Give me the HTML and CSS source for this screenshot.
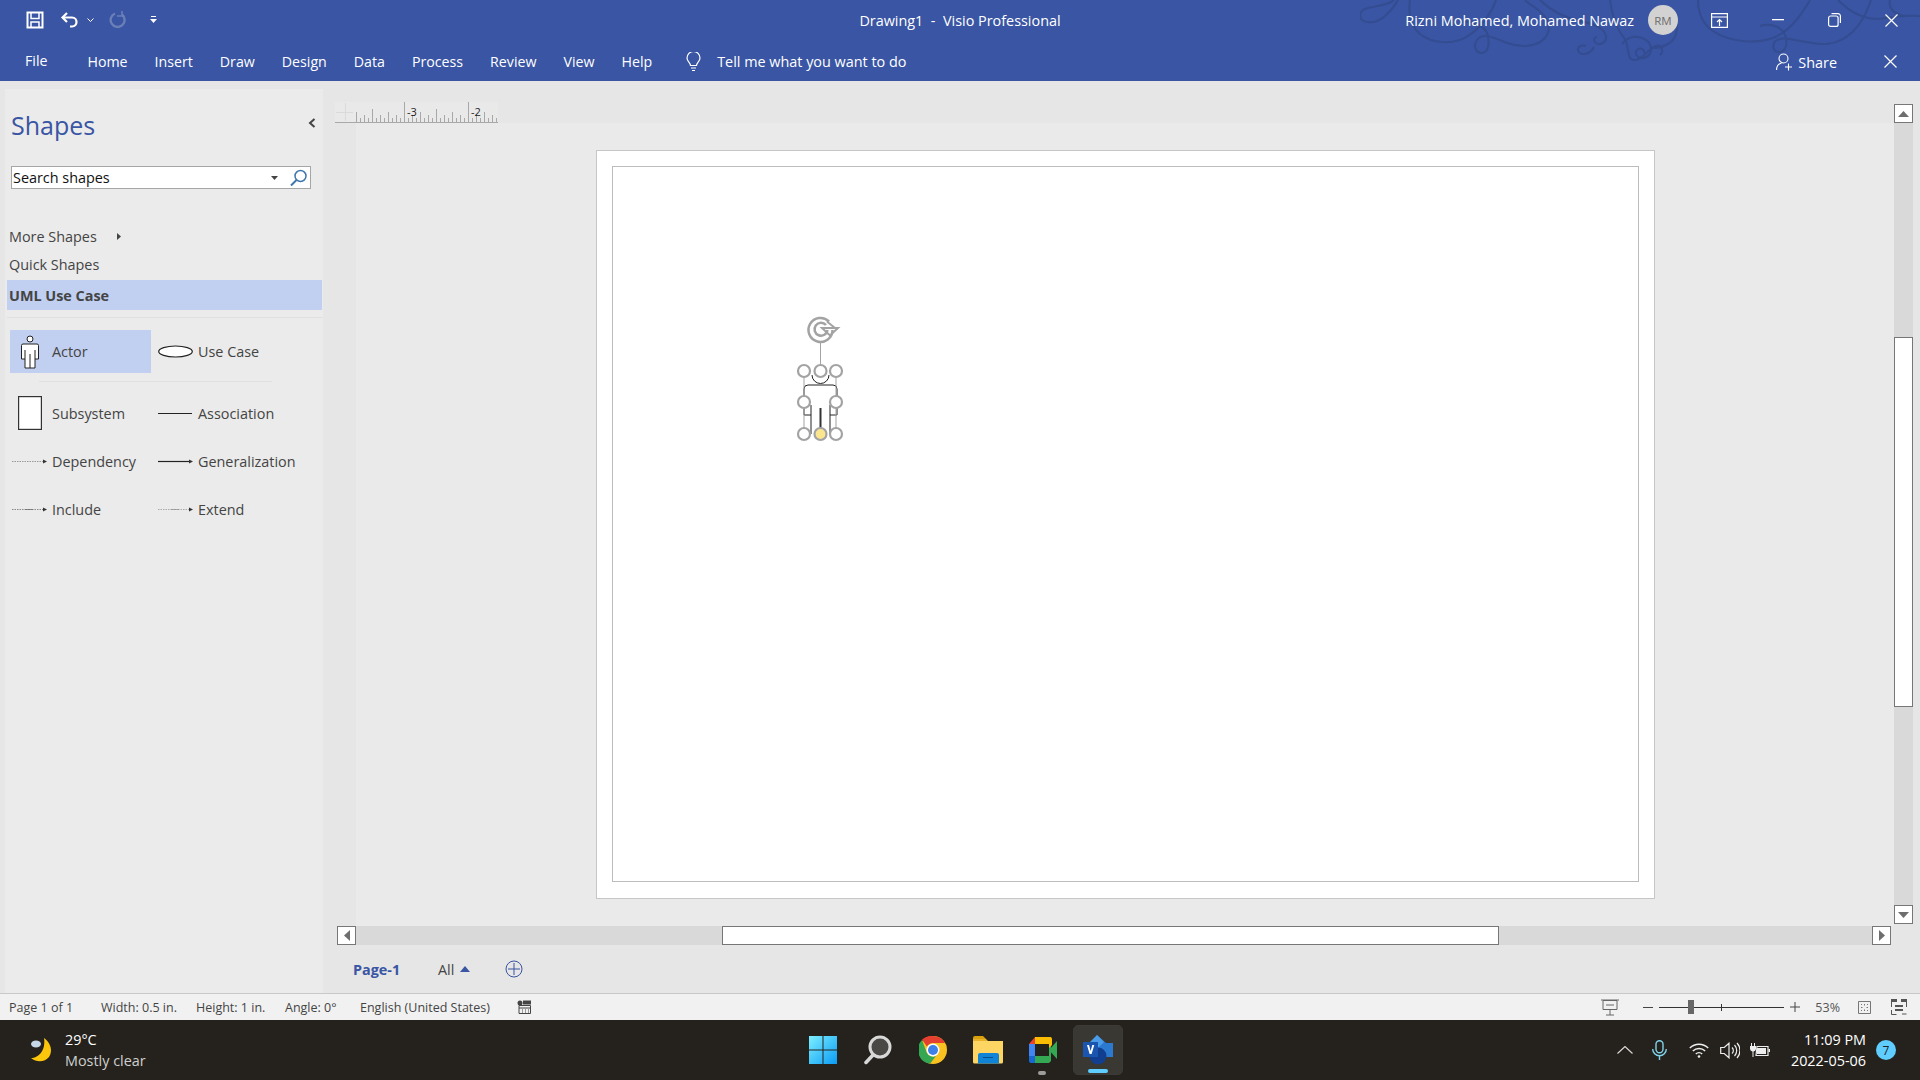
FILE: index.html
```html
<!DOCTYPE html>
<html lang="en">
<head>
<meta charset="UTF-8" />
<title>Drawing1 - Visio Professional</title>
<link rel="stylesheet" href="styles.css">
</head>
<body>

<!-- title bar + ribbon tabs -->
<header class="ribbon">
  <svg class="swirls" width="560" height="81" viewBox="0 0 560 81" fill="none" stroke="#344c90" stroke-width="2">
    <path d="M34 0C24 9 1 4 0 15c0 9 15 10 25 1C33 9 38 0 38 0"/>
    <path d="M50 0c-2 14 0 26 10 34 12 10 34 11 48 2C122 27 132 12 136 0"/>
    <path d="M100 22c12-2 26 4 28 14 2 10-1 17-6 17-7 0-9-8-5-13 6-8 18-2 30 3 14 5 30 4 38-5 8-10 2-22-8-29-6-4-10-7-12-9"/>
    <path d="M180 0c10 10 24 18 44 22 10 2 20 6 22 14 1 6-6 10-10 7-3-2-2-6 1-6"/>
    <path d="M226 46c-8-2-10 4-6 7 5 3 12-1 14-6"/>
    <path d="M250 0c2 16 6 28 14 38 6 8 2 22 10 22 10 0 14-12 22-14 6-2 8 6 4 9"/>
    <path d="M262 44c8-10 18-8 24-4 8 6 6 16-2 18-6 1-10-4-7-8 3-3 8-1 7 3"/>
    <path d="M296 14c12-6 24 6 20 20-3 10-14 14-24 14"/>
    <path d="M338 0c0 14 6 26 18 33 14 8 36 11 54 6 14-4 28-18 40-39"/>
    <path d="M400 26c12-4 24 2 26 12 2 10-3 15-8 14-6-1-6-9-1-12 10-5 30 5 50 4 18-2 34-14 44-44"/>
    <path d="M478 0c12 12 28 22 48 18 12-2 22-3 34-2"/>
    <path d="M530 0c-2 8 4 14 14 16"/>
  </svg>
  <div class="title-row">
    <div class="qat">
      <svg width="18" height="18" viewBox="0 0 18 18" fill="none" stroke="#fff" stroke-width="2"><path d="M1.500 1.500h15v15h-15z"/><path d="M5 2v5.500h8V2" stroke-width="1.500"/><path d="M5 17v-6h8v6" stroke-width="1.500"/></svg>
      <svg class="undo" width="20" height="18" viewBox="0 0 20 18" fill="none" stroke="#fff" stroke-width="2.200"><path d="M7 2 2.500 6.500 7 11"/><path d="M3 6.500h9c6 0 6 9 0 9h-2"/></svg>
      <svg class="caret" width="7" height="4" viewBox="0 0 7 4" fill="none" stroke="#fff"><path d="m.5.500 3 3 3-3"/></svg>
      <svg class="redo" width="18" height="20" viewBox="0 0 18 20" fill="none" stroke="#6a7fb8" stroke-width="2.400"><path d="M6 3.500a7 7 0 1 0 7 1"/><path d="M13 1v5h-5" stroke-width="1.600"/></svg>
      <svg class="caret-more" width="7" height="8" viewBox="0 0 7 8" fill="#fff"><path d="M1 0h5v1H1zM0 3h7L3.500 7z"/></svg>
    </div>
    <div class="doc-title">Drawing1&nbsp; -&nbsp; Visio Professional</div>
    <div class="account">
      <span class="user-name">Rizni Mohamed, Mohamed Nawaz</span>
      <span class="avatar">RM</span>
      <span class="win-btn display-btn">
        <svg width="17" height="15" viewBox="0 0 17 15" fill="none" stroke="#fff" stroke-width="1.200"><path d="M.6.600h15.800v13.800H.6zM.6 4h15.800"/><path d="M8.500 13V6.500M6 9l2.500-2.500L11 9"/></svg>
      </span>
      <span class="win-btn">
        <svg width="12" height="2" viewBox="0 0 12 2" fill="#fff"><path d="M0 0h12v1.300H0z"/></svg>
      </span>
      <span class="win-btn">
        <svg width="13" height="14" viewBox="0 0 13 14" fill="none" stroke="#fff" stroke-width="1.200"><rect x=".6" y="3" width="9.500" height="10.400" rx="2"/><path d="M3.500.7h6.500a2.400 2.400 0 0 1 2.400 2.400V10"/></svg>
      </span>
      <span class="win-btn">
        <svg width="13" height="13" viewBox="0 0 13 13" stroke="#fff" stroke-width="1.200"><path d="m.5.500 12 12M12.500.500l-12 12"/></svg>
      </span>
    </div>
  </div>
  <div class="tab-row">
    <nav class="tabs">
      <a class="tab-file">File</a>
      <a>Home</a><a>Insert</a><a>Draw</a><a>Design</a><a>Data</a><a>Process</a><a>Review</a><a>View</a><a>Help</a>
    </nav>
    <div class="tell-me">
      <svg width="15" height="20" viewBox="0 0 15 20" fill="none" stroke="#fff" stroke-width="1.200"><path d="M4.500 13.500c0-3-3.500-4-3.500-7.500a6.500 6.500 0 0 1 13 0c0 3.500-3.500 4.500-3.500 7.500z"/><path d="M5 16h5M6 18.500h3"/></svg>
      <span>Tell me what you want to do</span>
    </div>
    <div class="share">
      <svg width="17" height="18" viewBox="0 0 17 18" fill="none" stroke="#fff" stroke-width="1.100"><circle cx="7.500" cy="5.500" r="4.500"/><path d="M.6 17c0-4 2.400-6.500 5-7M12.500 10.500v7M9 14h7"/></svg>
      <span class="share-label">Share</span>
      <svg class="share-close" width="13" height="13" viewBox="0 0 13 13" stroke="#fff" stroke-width="1.200"><path d="m.5.500 12 12M12.500.500l-12 12"/></svg>
    </div>
  </div>
</header>

<main class="workspace">

  <!-- shapes panel -->
  <aside class="shapes-panel">
    <div class="panel-head">
      <h1>Shapes</h1>
      <svg width="8" height="10" viewBox="0 0 8 10" fill="none" stroke="#444" stroke-width="2"><path d="M6.500 1 2 5l4.500 4"/></svg>
    </div>
    <div class="search">
      <span class="search-text">Search shapes</span>
      <svg width="7" height="4" viewBox="0 0 7 4" fill="#444"><path d="M0 0h7L3.500 4z"/></svg>
      <svg class="search-icon" width="18" height="18" viewBox="0 0 18 18" fill="none" stroke="#3f76ad" stroke-width="1.500"><circle cx="10.500" cy="7" r="5.500"/><path d="M6.500 11 1 16.500" stroke-width="2"/></svg>
    </div>
    <ul class="stencils">
      <li>More Shapes <svg width="4" height="7" viewBox="0 0 4 7" fill="#444"><path d="M0 0l4 3.500L0 7z"/></svg></li>
      <li>Quick Shapes</li>
      <li class="active">UML Use Case</li>
    </ul>
    <div class="stencil-grid">
      <div class="master selected">
        <span class="master-icon">
          <svg width="20" height="34" viewBox="0 0 20 34" fill="#fff" stroke="#222" stroke-width="1"><circle cx="10" cy="4" r="3"/><path d="M3 9h14a1.500 1.500 0 0 1 1.500 1.500V24H15v9H5v-9H1.500V10.500A1.500 1.500 0 0 1 3 9zM5 15v9M15 15v9M10 19v14"/></svg>
        </span>
        <span>Actor</span>
      </div>
      <div class="master">
        <span class="master-icon">
          <svg width="35" height="13" viewBox="0 0 35 13" fill="#fff" stroke="#222" stroke-width="1.200"><ellipse cx="17.500" cy="6.500" rx="16.800" ry="5.500"/></svg>
        </span>
        <span>Use Case</span>
      </div>
      <div class="master-rule"></div>
      <div class="master">
        <span class="master-icon">
          <svg width="24" height="34" viewBox="0 0 24 34" fill="#fff" stroke="#333" stroke-width="1.200"><rect x=".6" y=".6" width="22.800" height="32.800"/></svg>
        </span>
        <span>Subsystem</span>
      </div>
      <div class="master">
        <span class="master-icon">
          <svg width="35" height="3" viewBox="0 0 35 3" stroke="#222" stroke-width="1.200"><path d="M0 1.500h34"/></svg>
        </span>
        <span>Association</span>
      </div>
      <div class="master">
        <span class="master-icon">
          <svg width="35" height="5" viewBox="0 0 35 5" fill="#333" stroke="#999"><path d="M0 2.500h31" stroke-dasharray="1.500 1"/><path d="M31 .5l4 2-4 2z" stroke="none"/></svg>
        </span>
        <span>Dependency</span>
      </div>
      <div class="master">
        <span class="master-icon">
          <svg width="35" height="5" viewBox="0 0 35 5" fill="#333" stroke="#222" stroke-width="1.200"><path d="M0 2.500h31"/><path d="M31 .5l4 2-4 2z" stroke="none"/></svg>
        </span>
        <span>Generalization</span>
      </div>
      <div class="master">
        <span class="master-icon">
          <svg width="35" height="5" viewBox="0 0 35 5" fill="#333" stroke="#888"><path d="M0 2.500h31" stroke-dasharray="1.500 1"/><path d="M13 2.500h8" stroke="#777" stroke-dasharray="2 1"/><path d="M31 .5l4 2-4 2z" stroke="none"/></svg>
        </span>
        <span>Include</span>
      </div>
      <div class="master">
        <span class="master-icon">
          <svg width="35" height="5" viewBox="0 0 35 5" fill="#333" stroke="#aaa"><path d="M0 2.500h31" stroke-dasharray="1.500 1"/><path d="M13 2.500h8" stroke="#999" stroke-dasharray="2 1"/><path d="M31 .5l4 2-4 2z" stroke="none"/></svg>
        </span>
        <span>Extend</span>
      </div>
    </div>
  </aside>

  <!-- drawing area -->
  <section class="drawing">
    <div class="ruler-corner">
      <svg width="21" height="21" viewBox="0 0 21 21" stroke="#dadada"><path d="M1 10.500h17M10.500 1v18"/></svg>
    </div>
    <div class="ruler">
      <svg width="142" height="21" viewBox="0 0 142 21">
        <defs>
          <pattern id="ticks" x="-16" y="0" width="64" height="21" patternUnits="userSpaceOnUse">
            <path stroke="#a8a8a8" d="M.5 0v21M4.500 16v5M8.500 13v8M12.500 16v5M16.500 10v11M20.500 16v5M24.500 13v8M28.500 16v5M32.500 7v14M36.500 16v5M40.500 13v8M44.500 16v5M48.500 10v11M52.500 16v5M56.500 13v8M60.500 16v5"/>
          </pattern>
        </defs>
        <rect width="142" height="21" fill="url(#ticks)"/>
      </svg>
      <span class="ruler-num num-3">-3</span>
      <span class="ruler-num num-2">-2</span>
    </div>
    <div class="ruler-gutter"></div>
    <div class="canvas">
      <div class="page">
        <div class="page-inner">
          <!-- selected actor -->
          <svg class="selection" width="60" height="130" viewBox="0 0 60 130" fill="none">
            <g stroke="#222" stroke-width="1">
              <path d="M19 60a8.500 8.500 0 0 0 17 0"/>
              <path d="M11 100V74a4 4 0 0 1 4-4h25a4 4 0 0 1 4 4v26"/>
              <path d="M18 90v29M37 90v29M11 100h7M37 100h7"/>
            </g>
            <path d="M27.500 93v26" stroke="#333" stroke-width="2"/>
            <g stroke="#a3a3a3">
              <path d="M27.500 27v29M11 56v63M43 56v63"/>
              <path stroke-width="2.500" d="M36 6.500A12 12 0 1 0 39.500 15"/>
              <path stroke-width="2.500" d="M33 10a6.500 6.500 0 1 0 1.500 5"/>
              <path stroke-width="2" d="M29 13h16l-8 7.500zM34 6.500l8 6.500"/>
            </g>
            <g stroke="#a3a3a3" stroke-width="2.200" fill="#fff">
              <circle cx="11" cy="56" r="6"/><circle cx="27.500" cy="56" r="6"/><circle cx="43" cy="56" r="6"/>
              <circle cx="11" cy="87" r="6"/><circle cx="43" cy="87" r="6"/>
              <circle cx="11" cy="119" r="6"/><circle cx="27.500" cy="119" r="6" fill="#fbe68f"/><circle cx="43" cy="119" r="6"/>
            </g>
          </svg>
        </div>
      </div>
    </div>
    <div class="vscroll">
      <span class="sb-btn"><svg width="11" height="6" viewBox="0 0 11 6" fill="#6e6e6e"><path d="M5.500 0 11 6H0z"/></svg></span>
      <div class="vtrack"><div class="vthumb"></div></div>
      <span class="sb-btn"><svg width="11" height="6" viewBox="0 0 11 6" fill="#6e6e6e"><path d="M5.500 6 11 0H0z"/></svg></span>
    </div>
    <div class="hscroll">
      <span class="sb-btn"><svg width="6" height="11" viewBox="0 0 6 11" fill="#6e6e6e"><path d="M0 5.500 6 0v11z"/></svg></span>
      <div class="htrack"><div class="hthumb"></div></div>
      <span class="sb-btn"><svg width="6" height="11" viewBox="0 0 6 11" fill="#6e6e6e"><path d="M6 5.500 0 0v11z"/></svg></span>
    </div>
    <div class="page-tabs">
      <span class="page-tab">Page-1</span>
      <span class="all-tab">All <svg width="10" height="6" viewBox="0 0 10 6" fill="#3955a3"><path d="M5 0l5 6H0z"/></svg></span>
      <svg class="add-page" width="18" height="18" viewBox="0 0 18 18" fill="none" stroke="#3955a3"><circle cx="9" cy="9" r="8"/><path d="M9 3v12M3 9h12"/></svg>
    </div>
  </section>
</main>

<footer class="statusbar">
  <span class="st-page">Page 1 of 1</span>
  <span class="st-width">Width: 0.5 in.</span>
  <span class="st-height">Height: 1 in.</span>
  <span class="st-angle">Angle: 0°</span>
  <span class="st-lang">English (United States)</span>
  <svg width="14" height="14" viewBox="0 0 14 14" fill="none" stroke="#444"><path d="M2 5.500h11.500v8H2zM2 8h11M5 10h1M8 10h1M11 10h1M5 12h1M8 12h1M11 12h1"/><circle cx="3" cy="3" r="2.500" fill="#444" stroke="none"/><path d="M6 .5h8v4H6z" fill="#444" stroke="none"/></svg>
  <div class="st-right">
    <svg width="18" height="17" viewBox="0 0 18 17" fill="none" stroke="#666"><path d="M0 1h18M2 1.500h14v9H2zM9 10.500V16M5 16h8M5 6h8"/></svg>
    <div class="zoom-ctl">
      <svg width="10" height="1" viewBox="0 0 10 1" fill="#444"><path d="M0 0h10v1H0z"/></svg>
      <div class="zoom-track"><span class="zoom-thumb"></span><span class="zoom-mid"></span></div>
      <svg width="10" height="10" viewBox="0 0 10 10" fill="#444"><path d="M0 4.500h10v1H0zM4.500 0h1v10h-1z"/></svg>
    </div>
    <span class="zoom-pct">53%</span>
    <svg class="fit-icon" width="13" height="13" viewBox="0 0 13 13" fill="none" stroke="#777"><path d="M.5.500h12v12H.5zM3 3l1 1M10 3 9 4M3 10l1-1M10 10 9 9M6.500 3v1.500M6.500 8.500V10M3 6.500h1.500M8.500 6.500H10"/></svg>
    <svg class="switch-icon" width="16" height="16" viewBox="0 0 16 16" fill="#555"><path d="M0 0h6v3H0zM10 0h6v3h-6zM4 6h8v2H4zM4 10h8v2H4z"/><path d="M.5 3v5M15.500 3v5M.5 11v4.500h5M11 15h4.500" fill="none" stroke="#555"/></svg>
  </div>
</footer>

<footer class="taskbar">
  <div class="weather">
    <svg width="24" height="26" viewBox="0 0 24 26"><path d="M15 1c7 5 9 13 5 19-4 5-12 6-18 1 8 0 15-8 13-20z" fill="#fcc60d"/><ellipse cx="7" cy="7" rx="5" ry="3.500" fill="#c6d8e8"/></svg>
    <div class="weather-text">
      <div>29°C</div>
      <div class="weather-sub">Mostly clear</div>
    </div>
  </div>
  <div class="task-icons">
    <span class="task-item">
      <svg width="30" height="30" viewBox="0 0 30 30">
        <defs><linearGradient id="winblue" x1="0" y1="0" x2="1" y2="1"><stop offset="0" stop-color="#7df0ff"/><stop offset="1" stop-color="#0a9bf5"/></linearGradient></defs>
        <path fill="url(#winblue)" d="M1 1h13.500v13.500H1zM15.500 1H29v13.500H15.500zM1 15.500h13.500V29H1zM15.500 15.500H29V29H15.500z"/>
      </svg>
    </span>
    <span class="task-item">
      <svg width="28" height="30" viewBox="0 0 28 30" fill="none"><circle cx="16" cy="12" r="10" fill="#4a4845" stroke="#d8d8d8" stroke-width="3"/><path d="M9 20 2 27.500" stroke="#d8d8d8" stroke-width="3.500" stroke-linecap="round"/></svg>
    </span>
    <span class="task-item">
      <svg width="28" height="28" viewBox="0 0 28 28"><circle cx="14" cy="14" r="14" fill="#f9c221"/><path d="M14 0a14 14 0 0 1 12.100 7H14a7 7 0 0 0-6.100 3.500L3 3.500A14 14 0 0 1 14 0z" fill="#e53f30"/><path d="M3 4a14 14 0 0 0 8 23.700L17 20a7 7 0 0 1-9.100-3z" fill="#35a753"/><circle cx="14" cy="14" r="6.500" fill="#fff"/><circle cx="14" cy="14" r="5" fill="#3f7fe8"/></svg>
    </span>
    <span class="task-item">
      <svg width="30" height="28" viewBox="0 0 30 28"><path d="M0 2a2 2 0 0 1 2-2h8l3 3H0z" fill="#d9a10b"/><path d="M0 5h30v21a1.500 1.500 0 0 1-1.500 1.500h-27A1.500 1.500 0 0 1 0 26z" fill="#fdd563"/><path d="M0 3h13l2 2H0z" fill="#e8b32a"/><path d="M5 19a2 2 0 0 1 2-2h17a2 2 0 0 1 2 2v8.500H5z" fill="#0f83d6"/><path d="M10 21h10v1H10z" fill="#044f91"/></svg>
    </span>
    <span class="task-item meet">
      <svg width="28" height="26" viewBox="0 0 28 26"><path d="M6 0h14v7H6z" fill="#fbbc04"/><path d="M0 7l6-7v7z" fill="#ea4335"/><path d="M0 7h6v12H0z" fill="#4285f4"/><path d="M0 19h6v7H2a2 2 0 0 1-2-2z" fill="#1967d2"/><path d="M6 19h14v7H6z" fill="#34a853"/><path d="M20 0h2v24l-2 2zM20 13 28 4v18z" fill="#34a853"/><path d="M20 0h1a2 2 0 0 1 2 2v6l-3 3z" fill="#fbbc04"/></svg>
      <i class="task-dot"></i>
    </span>
    <span class="task-item visio">
      <svg width="30" height="30" viewBox="0 0 30 30"><path d="M14 0l9 8h7v14h-7l-9 0-7-8z" fill="#2c7ad0"/><path d="M14 0l7 7-7 7-7-7z" fill="#4a9be8"/><circle cx="15" cy="21" r="8.500" fill="#123e8f"/><path d="M0 7h15v15H0z" fill="#1a55b0"/><path d="M4 10h2l1.600 6L9.300 10h2L8.600 19H6.600z" fill="#fff"/></svg>
      <i class="task-bar"></i>
    </span>
  </div>
  <div class="tray">
    <svg width="16" height="8" viewBox="0 0 16 8" fill="none" stroke="#ddd" stroke-width="1.100"><path d="m.5 7.500 7.500-7 7.500 7"/></svg>
    <svg class="tray-mic" width="15" height="20" viewBox="0 0 15 20" fill="none" stroke="#7fd3ea" stroke-width="1.400"><rect x="4" y=".7" width="7" height="12" rx="3.500"/><path d="M.7 9a6.800 6.800 0 0 0 13.600 0M7.500 16v4"/></svg>
    <svg class="tray-wifi" width="20" height="15" viewBox="0 0 20 15" fill="none" stroke="#eee" stroke-width="1.400"><path d="M.8 5a13 13 0 0 1 18.400 0M3.800 8a9 9 0 0 1 12.400 0M6.800 11a4.500 4.500 0 0 1 6.400 0"/><circle cx="10" cy="13.500" r="1.300" fill="#eee" stroke="none"/></svg>
    <svg class="tray-sound" width="20" height="17" viewBox="0 0 20 17" fill="none" stroke="#eee" stroke-width="1.200"><path d="M.7 5.500h3.500L9 1.200v14.600L4.200 11.500H.7zM12 5.500a4 4 0 0 1 0 6M14.500 3a8 8 0 0 1 0 11M17 1a11 11 0 0 1 0 15"/></svg>
    <svg class="tray-power" width="20" height="14" viewBox="0 0 20 14" fill="#eee"><path d="M7 3.500h11v9H6z" fill="none" stroke="#eee" stroke-width="1.200"/><path d="M7 5h9v6H7zM18.500 6H20v3h-1.500zM1 0h1v3H1zM4 0h1v3H4zM0 3h6v3a3 3 0 0 1-2.500 2.500V14h-1V8.500A3 3 0 0 1 0 6z"/></svg>
    <div class="clock">
      <div>11:09 PM</div>
      <div>2022-05-06</div>
    </div>
    <span class="notif">7</span>
  </div>
</footer>

</body>
</html>
```

FILE: styles.css
```css
* {
    box-sizing: border-box;
}
body {
    margin: 0;
    width: 1920px;
    height: 1080px;
    overflow: hidden;
    display: flex;
    flex-direction: column;
    font-family: 'Open Sans', 'Liberation Sans', sans-serif;
    font-size: 14.4px;
    color: #444;
    background-color: #e6e6e6;
}
svg {
    display: block;
    flex-shrink: 0;
}

/* title bar */
.ribbon {
    position: relative;
    height: 81px;
    flex-shrink: 0;
    background-color: #3955a3;
    color: #fff;
}
.swirls {
    position: absolute;
    top: 0;
    right: 0;
}
.title-row {
    position: relative;
    height: 40px;
    display: grid;
    grid-template-columns: 1fr auto 1fr;
    align-items: center;
}
.qat {
    display: flex;
    align-items: center;
    padding-left: 26px;
}
.undo {
    margin-left: 16px;
}
.caret {
    margin-left: 7px;
}
.redo {
    margin-left: 15px;
}
.caret-more {
    margin-left: 23px;
}
.account {
    display: flex;
    align-items: center;
    justify-content: flex-end;
}
.avatar {
    width: 30px;
    height: 30px;
    margin: 0 27px 0 14px;
    border-radius: 50%;
    background-color: #d2d2d2;
    color: #6d6d6d;
    font-size: 11.5px;
    display: flex;
    align-items: center;
    justify-content: center;
}
.win-btn {
    width: 57px;
    height: 40px;
    display: flex;
    align-items: center;
    justify-content: center;
}
.display-btn {
    width: 29px;
    margin-right: 15px;
}
.tab-row {
    position: relative;
    height: 41px;
    padding-top: 2px;
    display: flex;
    align-items: center;
}
.tabs {
    display: flex;
    align-items: center;
    padding-left: 25px;
    gap: 27px;
    font-size: 14.2px;
}
.tab-file {
    margin-right: 13px;
    transform: translateY(-1px);
}
.tell-me {
    display: flex;
    align-items: center;
    gap: 16px;
    margin-left: 34px;
}
.share {
    margin-left: auto;
    display: flex;
    align-items: center;
    gap: 5px;
    padding-right: 23px;
}
.share-label {
    transform: translateY(1px);
}
.share-close {
    margin-left: 42px;
}

/* main split */
.workspace {
    height: 912px;
    flex-shrink: 0;
    display: flex;
}
.shapes-panel {
    width: 318px;
    margin: 8px 12px 0 5px;
    background-color: #ebebeb;
    flex-shrink: 0;
}
.panel-head {
    height: 60px;
    padding: 19px 7px 0 6px;
    display: flex;
    align-items: flex-start;
    justify-content: space-between;
}
.panel-head h1 {
    margin: 0;
    font-size: 25px;
    line-height: 34px;
    font-weight: 400;
    color: #3955a3;
}
.panel-head svg {
    margin: 10px 0 0 0;
}
.search {
    width: 300px;
    height: 23px;
    margin: 17px 0 0 6px;
    padding: 0 2px 0 1px;
    border: 1px solid #a6a6a6;
    background-color: #fff;
    display: flex;
    align-items: center;
    gap: 8px;
}
.search-text {
    flex: 1;
    color: #111;
}
.search-icon {
    margin-left: 4px;
}
.stencils {
    list-style: none;
    margin: 33px 0 0;
    padding: 0;
}
.stencils li {
    height: 28px;
    padding-left: 4px;
    display: flex;
    align-items: center;
    gap: 20px;
}
.stencils li:nth-child(2) {
    height: 29px;
}
.stencils .active {
    height: 30px;
    margin: 1px 1px 0 2px;
    padding-left: 2px;
    font-weight: 700;
    background-color: #c1cff0;
}
.stencil-grid {
    margin: 7px 0 0 2px;
    padding: 12px 0 0 3px;
    border-top: 1px solid #e0e0e0;
    display: grid;
    grid-template-columns: 146px 146px;
    grid-template-rows: 43px 16px;
    grid-auto-rows: 48px;
}
.master {
    display: flex;
    align-items: center;
    padding-left: 0;
}
.master-rule {
    grid-column: 1 / 3;
    width: 233px;
    height: 1px;
    margin: 8px 0 0 29px;
    background-color: #e0e0e0;
}
.master.selected {
    width: 141px;
    background-color: #c1cff0;
}
.master-icon {
    width: 39px;
    display: flex;
    justify-content: center;
    flex-shrink: 0;
    margin-right: 3px;
}

/* drawing area */
.drawing {
    flex: 1;
    padding-top: 21px;
    display: grid;
    grid-template-columns: 21px 1538px 19px;
    grid-template-rows: 21px 803px 19px 48px;
}
.ruler-corner {
    background-color: #e9e9e9;
    border-bottom: 1px solid #a8a8a8;
}
.ruler {
    position: relative;
    width: 142px;
    height: 21px;
    background-color: #e9e9e9;
    border-bottom: 1px solid #a8a8a8;
}
.ruler-num {
    position: absolute;
    top: 3px;
    font-size: 11px;
    line-height: 14px;
    color: #222;
}
.num-3 {
    left: 51px;
}
.num-2 {
    left: 115px;
}
.canvas {
    position: relative;
    background-color: #eaeaea;
    padding: 27px 0 0 240px;
}
.page {
    width: 1059px;
    height: 749px;
    padding: 15px 15px 16px 15px;
    background-color: #fff;
    border: 1px solid #c6c6c6;
    display: flex;
}
.page-inner {
    position: relative;
    flex: 1;
    border: 1px solid #bcbcbc;
}
.selection {
    position: absolute;
    left: 180px;
    top: 148px;
}
.vscroll {
    grid-column: 3;
    grid-row: 1 / 3;
    margin-top: 2px;
    height: 820px;
    display: flex;
    flex-direction: column;
}
.sb-btn {
    width: 19px;
    height: 19px;
    flex-shrink: 0;
    background-color: #fff;
    border: 1px solid #777;
    display: flex;
    align-items: center;
    justify-content: center;
}
.vtrack {
    flex: 1;
    padding-top: 214px;
    background-color: #d9d9d9;
}
.vthumb {
    height: 370px;
    background-color: #fff;
    border: 1px solid #777;
}
.hscroll {
    grid-column: 1 / 3;
    grid-row: 3;
    margin-left: 2px;
    width: 1554px;
    display: flex;
}
.htrack {
    flex: 1;
    padding-left: 366px;
    background-color: #d9d9d9;
}
.hthumb {
    width: 777px;
    height: 19px;
    background-color: #fff;
    border: 1px solid #777;
}
.page-tabs {
    grid-column: 1 / 4;
    grid-row: 4;
    padding-left: 18px;
    display: flex;
    align-items: center;
}
.page-tab {
    width: 85px;
    font-weight: 700;
    color: #3955a3;
}
.all-tab {
    width: 67px;
    display: flex;
    align-items: center;
    gap: 6px;
}

/* status bar */
.statusbar {
    height: 27px;
    flex-shrink: 0;
    border-top: 1px solid #c8c8c8;
    background-color: #f1f1f1;
    display: flex;
    align-items: center;
    font-size: 12.5px;
    padding-left: 9px;
}
.st-page {
    width: 92px;
}
.st-width {
    width: 95px;
}
.st-height {
    width: 89px;
}
.st-angle {
    width: 75px;
}
.st-lang {
    width: 157px;
}
.st-right {
    margin-left: auto;
    display: flex;
    align-items: center;
    padding-right: 13px;
}
.zoom-ctl {
    display: flex;
    align-items: center;
    gap: 6px;
    margin-left: 24px;
}
.zoom-track {
    position: relative;
    width: 125px;
    height: 1px;
    background-color: #333;
}
.zoom-thumb {
    position: absolute;
    left: 29px;
    top: -7px;
    width: 6px;
    height: 14px;
    background-color: #666;
}
.zoom-mid {
    position: absolute;
    left: 62px;
    top: -3px;
    width: 1px;
    height: 7px;
    background-color: #333;
}
.zoom-pct {
    margin-left: 15px;
    color: #555;
}
.fit-icon {
    margin-left: 18px;
}
.switch-icon {
    margin-left: 20px;
}

/* taskbar */
.taskbar {
    position: relative;
    height: 60px;
    flex-shrink: 0;
    background-color: #25221d;
    color: #fff;
    display: flex;
    align-items: center;
    justify-content: space-between;
}
.weather {
    display: flex;
    align-items: center;
    gap: 12px;
    padding-left: 29px;
    line-height: 21px;
}
.weather-sub {
    color: #cfcfcf;
}
.task-icons {
    position: absolute;
    left: 795px;
    top: 0;
    height: 60px;
    display: flex;
    align-items: center;
}
.task-item {
    position: relative;
    width: 55px;
    height: 50px;
    display: flex;
    align-items: center;
    justify-content: center;
}
.task-dot {
    position: absolute;
    left: 23px;
    bottom: 0;
    width: 8px;
    height: 4px;
    border-radius: 2px;
    background-color: #9c9c9c;
}
.visio {
    width: 50px;
    margin-left: 3px;
    border-radius: 5px;
    border: 1px solid #3c3a36;
    background-color: #3a3833;
}
.task-bar {
    position: absolute;
    left: 14px;
    bottom: 1px;
    width: 20px;
    height: 4px;
    border-radius: 2px;
    background-color: #60cdff;
}
.tray {
    display: flex;
    align-items: center;
    padding-right: 24px;
}
.tray-mic {
    margin-left: 19px;
}
.tray-wifi {
    margin-left: 22px;
}
.tray-sound {
    margin-left: 11px;
}
.tray-power {
    margin-left: 10px;
}
.clock {
    width: 80px;
    margin-left: 16px;
    text-align: right;
    line-height: 21px;
    white-space: nowrap;
}
.notif {
    width: 20px;
    height: 20px;
    margin-left: 10px;
    border-radius: 50%;
    background-color: #60cdff;
    color: #222;
    font-size: 12px;
    display: flex;
    align-items: center;
    justify-content: center;
}
```
